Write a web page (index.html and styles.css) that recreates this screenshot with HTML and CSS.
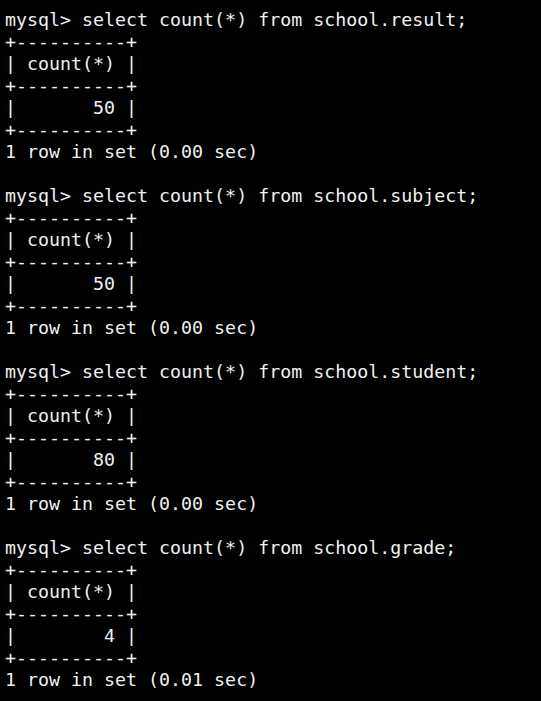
FILE: index.html
```html
<!DOCTYPE html>
<html>
<head>
<meta charset="utf-8">
<link rel="stylesheet" href="styles.css">
</head>
<body>
<pre class="term">mysql&gt; select count(*) from school.result;
+----------+
| count(*) |
+----------+
|       50 |
+----------+
1 row in set (0.00 sec)

mysql&gt; select count(*) from school.subject;
+----------+
| count(*) |
+----------+
|       50 |
+----------+
1 row in set (0.00 sec)

mysql&gt; select count(*) from school.student;
+----------+
| count(*) |
+----------+
|       80 |
+----------+
1 row in set (0.00 sec)

mysql&gt; select count(*) from school.grade;
+----------+
| count(*) |
+----------+
|        4 |
+----------+
1 row in set (0.01 sec)
</pre>
</body>
</html>
```
FILE: styles.css
```css
html, body {
  margin: 0;
  padding: 0;
  background: #000;
  height: 100%;
  overflow: hidden;
}
.term {
  margin: 0;
  padding: 9px 0 0 5px;
  font-family: "DejaVu Sans Mono", "Liberation Mono", monospace;
  font-size: 18.3px;
  line-height: 22px;
  color: #f0f0f0;
}
```
